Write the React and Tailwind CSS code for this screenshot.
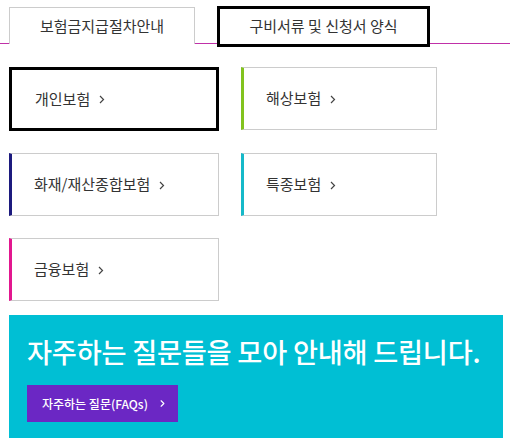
import { ChevronRight } from "lucide-react";

const cards = [
  { name: "개인보험", bar: "border-l-black", active: true },
  { name: "해상보험", bar: "border-l-[#82c31e]" },
  { name: "화재/재산종합보험", bar: "border-l-[#1c1a7e]" },
  { name: "특종보험", bar: "border-l-[#16b9c9]" },
  { name: "금융보험", bar: "border-l-[#e2178f]" },
];

function Chevron() {
  return (
    <svg width="6" height="9" viewBox="0 0 6 9" className="ml-[9px] mt-[1px]">
      <path d="M1 1l3.5 3.5L1 8" fill="none" stroke="#444" strokeWidth="1.2" />
    </svg>
  );
}

function Card({ item, wide }) {
  const size = wide ? "w-[210px]" : "w-[196px]";
  if (item.active) {
    return (
      <div className={`${size} h-[64px] border-[3px] border-black bg-white flex items-center pl-[23px]`}>
        <span className="text-[15px] text-[#333]">{item.name}</span>
        <Chevron />
      </div>
    );
  }
  return (
    <div
      className={`${size} h-[63px] border border-[#cccccc] border-l-[3px] ${item.bar} bg-white flex items-center pl-[22px]`}
    >
      <span className="text-[15px] text-[#333]">{item.name}</span>
      <Chevron />
    </div>
  );
}

export default function App() {
  return (
    <div
      className="w-[510px] h-[446px] bg-white overflow-hidden"
      style={{ fontFamily: '"Noto Sans CJK KR", "Noto Sans", sans-serif' }}
    >
      <div className="h-[43px] pt-[6px] flex items-start">
        <div className="ml-[9px] mt-[1px] w-[186px] h-[37px] border border-b-0 border-[#cccccc] bg-white flex items-center justify-center text-[15px] text-[#333]">
          보험금지급절차안내
        </div>
        <div className="relative z-10 ml-[22px] w-[213px] h-[41px] border-[3px] border-black bg-white flex items-center justify-center text-[15px] text-[#333]">
          구비서류 및 신청서 양식
        </div>
      </div>
      <div className="h-px bg-[#c030a8]" />

      <div className="pl-[9px] pt-[23px] grid grid-cols-[210px_196px] gap-x-[22px] gap-y-[22px]">
        {cards.map((c, i) => (
          <Card key={c.name} item={c} wide={i % 2 === 0} />
        ))}
      </div>

      <div className="ml-[9px] mt-[14px] w-[494px] h-[123px] bg-[#00bfd4] pl-[18px] pt-[18px]">
        <h2 className="text-[27.2px] leading-[36px] text-white font-medium tracking-[-0.2px]">
          자주하는 질문들을 모아 안내해 드립니다.
        </h2>
        <button className="mt-[16px] w-[151px] h-[37px] bg-[#6b27c4] text-white text-[12px] font-medium flex items-center pl-[15px]">
          자주하는 질문(FAQs)
          <ChevronRight size={11} strokeWidth={2.5} className="ml-[9px]" />
        </button>
      </div>
    </div>
  );
}
